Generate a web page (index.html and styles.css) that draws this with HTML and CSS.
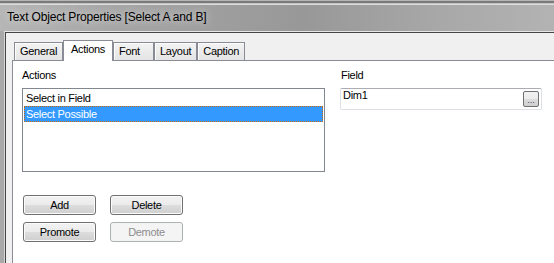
FILE: index.html
```html
<!DOCTYPE html>
<html>
    <head>
        <title>Text Object Properties</title>
        <link rel="stylesheet" href="styles.css">
    </head>
    <body>
        <div class="window">
            <div class="titlebar">Text Object Properties [Select A and B]</div>
            <div class="client">
                <div class="tabs">
                    <div class="tab">General</div>
                    <div class="tab active">Actions</div>
                    <div class="tab">Font</div>
                    <div class="tab">Layout</div>
                    <div class="tab">Caption</div>
                </div>
                <div class="panel">
                    <div class="col left">
                        <div class="label">Actions</div>
                        <div class="listbox">
                            <div class="item">Select in Field</div>
                            <div class="item selected">Select Possible</div>
                        </div>
                        <div class="buttons">
                            <button class="btn">Add</button>
                            <button class="btn">Delete</button>
                            <button class="btn">Promote</button>
                            <button class="btn" disabled>Demote</button>
                        </div>
                    </div>
                    <div class="col right">
                        <div class="label">Field</div>
                        <div class="field">
                            <span class="value">Dim1</span>
                            <button class="browse">...</button>
                        </div>
                    </div>
                </div>
            </div>
        </div>
    </body>
</html>
```

FILE: styles.css
```css
* {
    margin: 0;
    padding: 0;
    box-sizing: border-box;
}
html,
body {
    height: 100%;
    overflow: hidden;
}
body {
    background-color: #b5b5b5;
    font-family: "Liberation Sans", Arial, sans-serif;
    font-size: 11px;
    letter-spacing: -0.3px;
    color: #000;
}
.window {
    height: 100%;
    margin-top: 1px;
    border-top: 2px solid #7a7a7a;
    display: flex;
    flex-direction: column;
    background-color: #a9a9a9;
}
.titlebar {
    height: 28px;
    border-top: 1px solid #c4c4c4;
    box-shadow: inset 0 1px #dcdcdc;
    background: linear-gradient(to right, #b6b6b6 0%, #a5a5a5 22%, #989898 55%, #a7a7a7 78%, #b3b3b3 100%);
    padding-left: 7px;
    font-size: 12px;
    letter-spacing: -0.17px;
    line-height: 27px;
    text-shadow: 0 0 7px #e4e4e4;
}
.client {
    flex: 1;
    display: flex;
    flex-direction: column;
    margin-left: 4px;
    border-top: 1px solid #e6e6e6;
    border-left: 1px solid #d6d6d6;
    box-shadow: inset 1px 1px #454545;
    background-color: #f0f0f0;
    padding: 8px 0 0 7px;
}
.tabs {
    display: flex;
    align-items: flex-end;
    height: 20px;
    margin-left: 2px;
}
.tab {
    height: 18px;
    min-width: 41px;
    padding: 0 5px;
    border: 1px solid #898c95;
    border-bottom: none;
    background: linear-gradient(#f3f3f3, #e4e4e4);
    box-shadow: inset 1px 1px #fcfcfc;
    line-height: 17px;
}
.tab.active {
    position: relative;
    z-index: 1;
    height: 21px;
    margin-bottom: -1px;
    padding: 0 7px;
    background: #fff;
    box-shadow: none;
    line-height: 16px;
}
.panel {
    flex: 1;
    display: flex;
    gap: 15px;
    background-color: #fff;
    border-top: 1px solid #898c95;
    border-left: 1px solid #898c95;
    padding: 8px 0 0 9px;
}
.col.left {
    width: 303px;
}
.col.right {
    width: 202px;
}
.label {
    line-height: 13px;
    margin-bottom: 6px;
}
.right .label {
    padding-left: 1px;
}
.listbox {
    height: 84px;
    border: 1px solid #828790;
    padding: 1px 1px;
}
.item {
    height: 16px;
    line-height: 16px;
    padding-left: 2px;
}
.item.selected {
    background-color: #3399ff;
    color: #fff;
    border: 1px dotted #cc6600;
    line-height: 14px;
    padding-left: 1px;
}
.buttons {
    display: grid;
    grid-template-columns: repeat(2, 73px);
    column-gap: 14px;
    row-gap: 7px;
    margin: 23px 0 0 1px;
}
.btn {
    height: 20px;
    border: 1px solid #707070;
    border-radius: 3px;
    background: linear-gradient(#f2f2f2 0%, #ebebeb 50%, #dddddd 50%, #cfcfcf 100%);
    box-shadow: inset 0 0 0 1px #fbfbfb;
    font-family: inherit;
    font-size: 11px;
    letter-spacing: -0.3px;
    line-height: 18px;
    color: #000;
}
.btn:disabled {
    border-color: #adb2b5;
    background: #f4f4f4;
    box-shadow: none;
    color: #8d8d8d;
}
.field {
    display: flex;
    align-items: flex-start;
    height: 22px;
    border: 1px solid #dde1e7;
    border-top-color: #abadb3;
    border-radius: 2px;
}
.value {
    flex: 1;
    padding-left: 2px;
    line-height: 13px;
}
.browse {
    width: 16px;
    height: 16px;
    margin: 2px 2px 0 0;
    border: 1px solid #707070;
    border-radius: 2px;
    background: linear-gradient(#f2f2f2 0%, #ebebeb 50%, #dddddd 50%, #cfcfcf 100%);
    font-family: inherit;
    font-size: 9px;
    letter-spacing: 0;
    line-height: 16px;
    color: #3c3c5a;
}
```
